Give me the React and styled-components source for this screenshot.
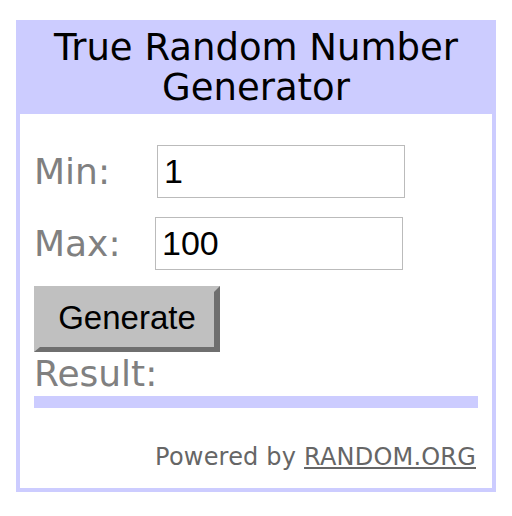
import React from "react";
import styled, { createGlobalStyle } from "styled-components";

const Global = createGlobalStyle`
  html, body { margin: 0; padding: 0; background: #ffffff; }
  body { padding: 20px 16px 0; }
`;

const Widget = styled.div`
  width: 480px;
  box-sizing: border-box;
  border: 4px solid #ccccff;
  background: #ffffff;
  font-family: Verdana, "DejaVu Sans", sans-serif;
`;

const Header = styled.h1`
  margin: 0;
  padding: 4px 0 6px;
  background: #ccccff;
  color: #000000;
  text-align: center;
  font-size: 37px;
  font-weight: normal;
  line-height: 40px;
`;

const Content = styled.div`
  display: flex;
  flex-direction: column;
  padding: 31px 14px 17px;
`;

const Row = styled.div`
  display: flex;
  align-items: center;
  height: 53px;
  margin-bottom: ${(p) => p.$gap}px;
`;

const Label = styled.label`
  width: ${(p) => p.$width}px;
  box-sizing: border-box;
  font-size: 36px;
  line-height: 53px;
  color: #808080;
`;

const Input = styled.input`
  width: 248px;
  height: 53px;
  box-sizing: border-box;
  border: 1px solid #bbbbbb;
  padding: 0 6px;
  font-family: "Liberation Sans", Arial, sans-serif;
  font-size: 34px;
  color: #000000;
  background: #ffffff;
  outline: none;
`;

const Button = styled.button`
  align-self: flex-start;
  width: 186px;
  height: 66px;
  box-sizing: border-box;
  border-style: solid;
  border-width: 6px 6px 5px 6px;
  border-color: #c0c0c0 #6f6f6f #6f6f6f #c0c0c0;
  background: #c0c0c0;
  padding: 0 0 4px;
  font-family: "Liberation Sans", Arial, sans-serif;
  font-size: 33px;
  color: #000000;
  cursor: pointer;
`;

const ResultLabel = styled.div`
  font-size: 36px;
  line-height: 44px;
  color: #808080;
`;

const ResultBar = styled.div`
  height: 12px;
  background: #ccccff;
`;

const Footer = styled.div`
  margin-top: 35px;
  text-align: right;
  padding-right: 2px;
  font-size: 24px;
  letter-spacing: 0.2px;
  line-height: 28px;
  color: #666666;
`;

const Link = styled.a`
  color: #666666;
  text-decoration: underline;
`;

export default function App() {
  return (
    <>
      <Global />
      <Widget>
        <Header>True Random Number Generator</Header>
        <Content>
          <Row $gap={19}>
            <Label $width={123}>Min:</Label>
            <Input defaultValue="1" />
          </Row>
          <Row $gap={16}>
            <Label $width={121}>Max:</Label>
            <Input defaultValue="100" />
          </Row>
          <Button>Generate</Button>
          <ResultLabel>Result:</ResultLabel>
          <ResultBar />
          <Footer>
            Powered by <Link href="#">RANDOM.ORG</Link>
          </Footer>
        </Content>
      </Widget>
    </>
  );
}
